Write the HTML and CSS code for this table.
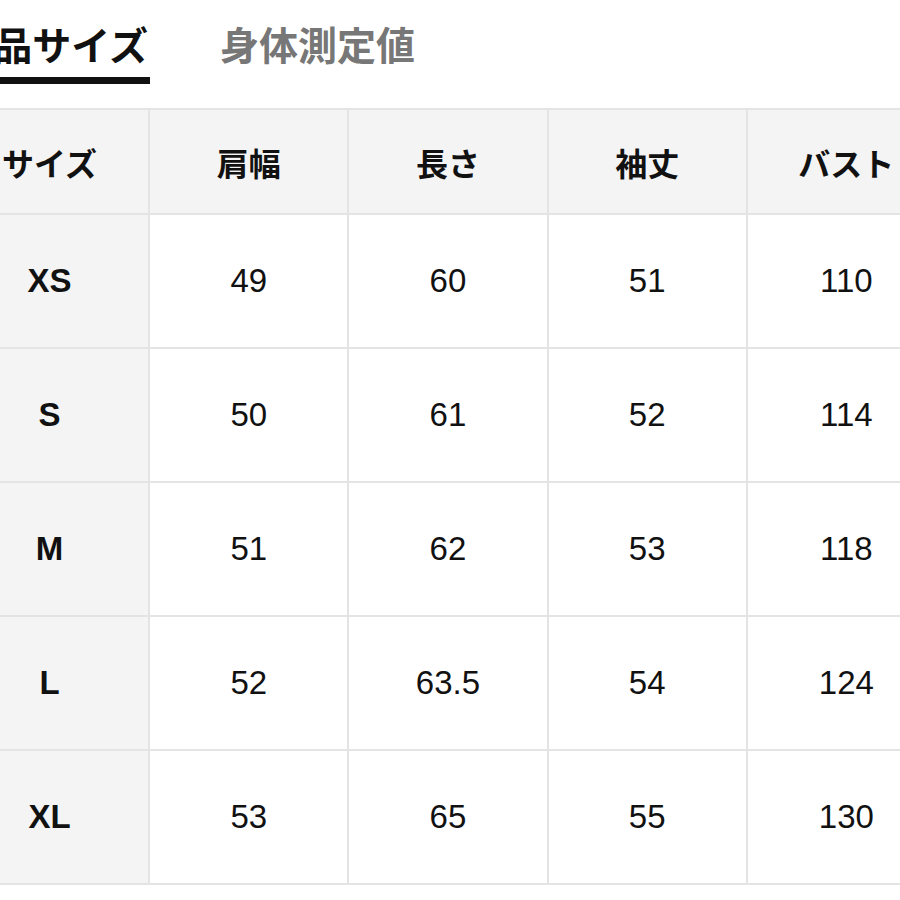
FILE: index.html
```html
<!DOCTYPE html>
<html lang="ja">
<head>
<meta charset="utf-8">
<link rel="stylesheet" href="styles.css">
</head>
<body>
<div class="page">
  <div class="tabs">
    <div class="tab active">商品サイズ</div>
    <div class="tab">身体測定値</div>
  </div>
  <table class="size-table">
    <thead>
      <tr><th>サイズ</th><th>肩幅</th><th>長さ</th><th>袖丈</th><th>バスト</th></tr>
    </thead>
    <tbody>
      <tr><th>XS</th><td>49</td><td>60</td><td>51</td><td>110</td></tr>
      <tr><th>S</th><td>50</td><td>61</td><td>52</td><td>114</td></tr>
      <tr><th>M</th><td>51</td><td>62</td><td>53</td><td>118</td></tr>
      <tr><th>L</th><td>52</td><td>63.5</td><td>54</td><td>124</td></tr>
      <tr><th>XL</th><td>53</td><td>65</td><td>55</td><td>130</td></tr>
    </tbody>
  </table>
</div>
</body>
</html>
```
FILE: styles.css
```css
html, body {
  margin: 0;
  padding: 0;
  background: #fff;
  overflow: hidden;
}
.page {
  width: 900px;
  height: 900px;
  overflow: hidden;
  font-family: "Liberation Sans", "Noto Sans CJK JP", sans-serif;
  color: #111;
}
.tabs {
  display: flex;
  margin-left: -50px;
  height: 108px;
  align-items: flex-start;
  gap: 70px;
}
.tab {
  font-family: "Noto Sans CJK JP", sans-serif;
  font-weight: 700;
  font-size: 39px;
  line-height: 1;
  padding-top: 24px;
  color: #777;
}
.tab.active {
  color: #111;
  width: 200px;
  text-align: right;
  padding-right: 2px;
  box-sizing: border-box;
  padding-bottom: 14px;
  border-bottom: 7px solid #111;
}
.size-table {
  margin-left: -51px;
  width: 998px;
  table-layout: fixed;
  border-collapse: collapse;
}
.size-table th,
.size-table td {
  border: 2px solid #e4e4e4;
  text-align: center;
  vertical-align: middle;
  padding: 0;
}
.size-table thead th {
  height: 103px;
  background: #f4f4f4;
  font-family: "Noto Sans CJK JP", sans-serif;
  font-weight: 700;
  font-size: 32px;
}
.size-table tbody th {
  background: #f4f4f4;
  font-weight: 700;
  font-size: 33px;
}
.size-table tbody td {
  height: 132px;
  font-size: 33px;
  font-weight: 400;
  background: #fff;
}
```
